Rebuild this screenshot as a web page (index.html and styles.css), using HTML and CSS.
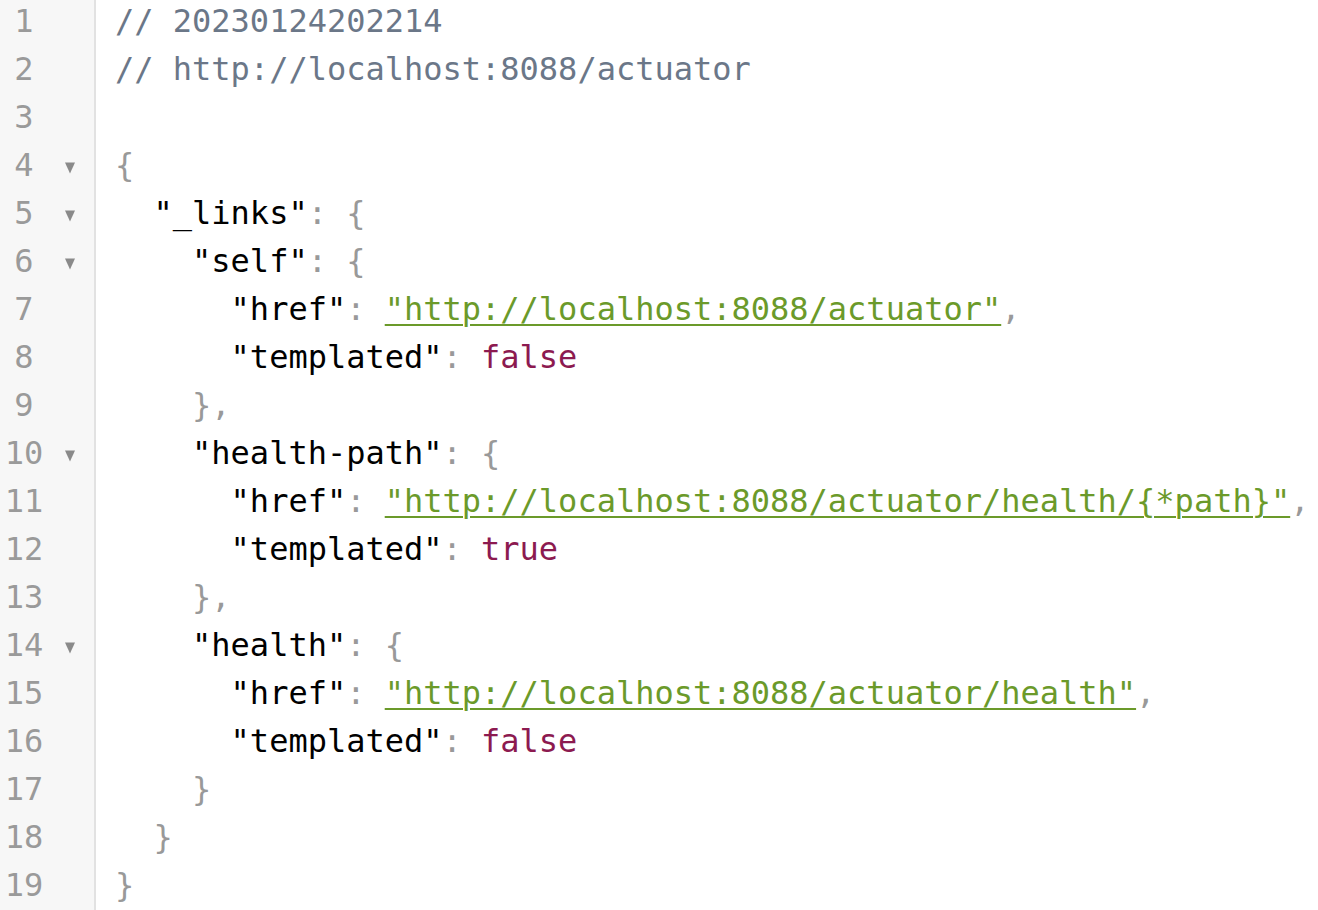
FILE: index.html
```html
<!DOCTYPE html>
<html>
<head>
<meta charset="utf-8">
<link rel="stylesheet" href="styles.css">
</head>
<body>
<div class="editor">
  <div class="gutter">
    <div class="gl"><span class="num">1</span><span class="fold"></span></div>
    <div class="gl"><span class="num">2</span><span class="fold"></span></div>
    <div class="gl"><span class="num">3</span><span class="fold"></span></div>
    <div class="gl"><span class="num">4</span><span class="fold"><svg class="tri" viewBox="0 0 10 11"><polygon points="0,0 10,0 5,11"/></svg></span></div>
    <div class="gl"><span class="num">5</span><span class="fold"><svg class="tri" viewBox="0 0 10 11"><polygon points="0,0 10,0 5,11"/></svg></span></div>
    <div class="gl"><span class="num">6</span><span class="fold"><svg class="tri" viewBox="0 0 10 11"><polygon points="0,0 10,0 5,11"/></svg></span></div>
    <div class="gl"><span class="num">7</span><span class="fold"></span></div>
    <div class="gl"><span class="num">8</span><span class="fold"></span></div>
    <div class="gl"><span class="num">9</span><span class="fold"></span></div>
    <div class="gl"><span class="num">10</span><span class="fold"><svg class="tri" viewBox="0 0 10 11"><polygon points="0,0 10,0 5,11"/></svg></span></div>
    <div class="gl"><span class="num">11</span><span class="fold"></span></div>
    <div class="gl"><span class="num">12</span><span class="fold"></span></div>
    <div class="gl"><span class="num">13</span><span class="fold"></span></div>
    <div class="gl"><span class="num">14</span><span class="fold"><svg class="tri" viewBox="0 0 10 11"><polygon points="0,0 10,0 5,11"/></svg></span></div>
    <div class="gl"><span class="num">15</span><span class="fold"></span></div>
    <div class="gl"><span class="num">16</span><span class="fold"></span></div>
    <div class="gl"><span class="num">17</span><span class="fold"></span></div>
    <div class="gl"><span class="num">18</span><span class="fold"></span></div>
    <div class="gl"><span class="num">19</span><span class="fold"></span></div>
  </div>
  <div class="code">
    <div class="ln"><span class="cm">// 20230124202214</span></div>
    <div class="ln"><span class="cm">// http://localhost:8088/actuator</span></div>
    <div class="ln"> </div>
    <div class="ln"><span class="p">{</span></div>
    <div class="ln">  <span class="k">"_links"</span><span class="p">: {</span></div>
    <div class="ln">    <span class="k">"self"</span><span class="p">: {</span></div>
    <div class="ln">      <span class="k">"href"</span><span class="p">: </span><a class="s">"http://localhost:8088/actuator"</a><span class="p">,</span></div>
    <div class="ln">      <span class="k">"templated"</span><span class="p">: </span><span class="b">false</span></div>
    <div class="ln">    <span class="p">},</span></div>
    <div class="ln">    <span class="k">"health-path"</span><span class="p">: {</span></div>
    <div class="ln">      <span class="k">"href"</span><span class="p">: </span><a class="s">"http://localhost:8088/actuator/health/{*path}"</a><span class="p">,</span></div>
    <div class="ln">      <span class="k">"templated"</span><span class="p">: </span><span class="b">true</span></div>
    <div class="ln">    <span class="p">},</span></div>
    <div class="ln">    <span class="k">"health"</span><span class="p">: {</span></div>
    <div class="ln">      <span class="k">"href"</span><span class="p">: </span><a class="s">"http://localhost:8088/actuator/health"</a><span class="p">,</span></div>
    <div class="ln">      <span class="k">"templated"</span><span class="p">: </span><span class="b">false</span></div>
    <div class="ln">    <span class="p">}</span></div>
    <div class="ln">  <span class="p">}</span></div>
    <div class="ln"><span class="p">}</span></div>
  </div>
</div>
</body>
</html>
```

FILE: styles.css
```css
html, body {
  margin: 0;
  padding: 0;
  background: #ffffff;
}

body {
  font-family: "DejaVu Sans Mono", "Liberation Mono", monospace;
  font-size: 32px;
  line-height: 42px;
  color: #000000;
  overflow: hidden;
}

.editor {
  display: flex;
  min-height: 100vh;
}

.gutter {
  width: 94px;
  flex: none;
  background: #f7f7f7;
  border-right: 2px solid #e2e2e2;
  color: #9a9a9a;
}

.gl {
  display: flex;
  height: 48px;
  align-items: flex-start;
}

.num {
  flex: none;
  width: 42px;
  margin-left: 3px;
  text-align: center;
}

.fold {
  flex: none;
  width: 50px;
  height: 48px;
  display: flex;
  justify-content: center;
  align-items: center;
}

.tri {
  width: 10px;
  height: 12px;
  fill: #8a8a8a;
}

.code {
  padding-left: 19px;
}

.ln {
  height: 48px;
  white-space: pre;
}

.cm {
  color: #6b7788;
}

.k {
  color: #000000;
}

.p {
  color: #999999;
}

.s {
  color: #6b9a2a;
  text-decoration: underline;
  text-decoration-thickness: 2px;
  text-underline-offset: 4px;
}

.b {
  color: #8c1a50;
}
```
